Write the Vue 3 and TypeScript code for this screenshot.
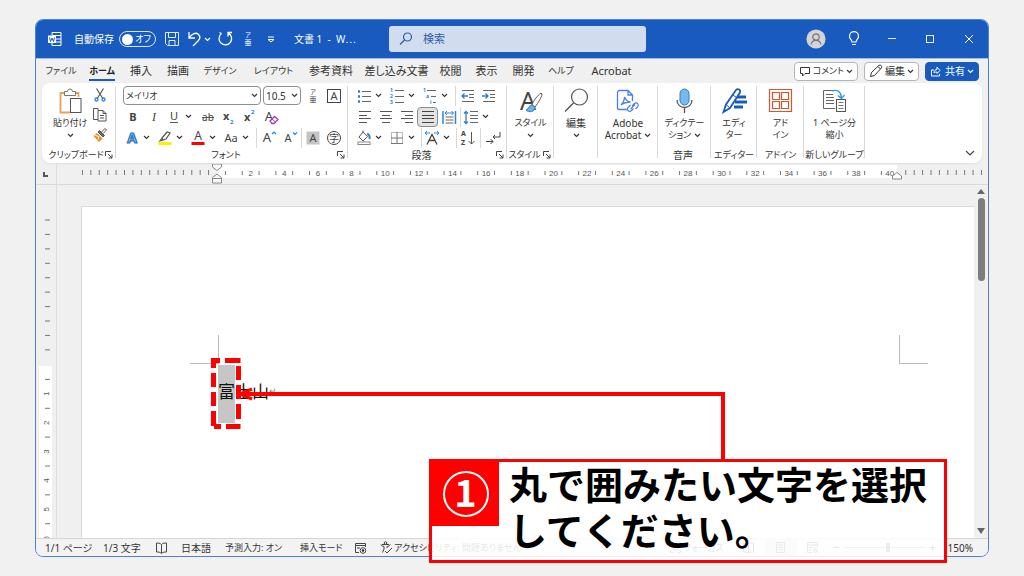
<script setup lang="ts">
import { h, ref, type FunctionalComponent } from 'vue'

const glyphs: Record<string, string> = {
  word: '<path d="M5 4V1.500h9v13H5V12M5 4.500h9M9 8h5M9 11h5" fill="none" stroke="#fff"/><rect x="1" y="4.500" width="8" height="7.500" fill="#fff"/><path d="M2.500 6.500l1 4 1.500-3.500 1.500 3.500 1-4" fill="none" stroke="#185abd"/>',
  save: '<path d="M2.500 2.500h13v13H4.500l-2-2zM5.500 2.500v5h7v-5M6 15.500v-5h6v5" fill="none" stroke="#dfe9f8"/>',
  undo: '<path d="M3 2v6h6M3 8C6 3.500 10 2 12.500 4.500S14 9 12 11l-5 5" fill="none" stroke="#fff" stroke-width="1.300"/>',
  redo: '<path d="M12 6.500V2.500h4M12 2.800A6.300 6.300 0 1 1 5.500 3.500M5.500 3.500L3.500 2.500" fill="none" stroke="#fff" stroke-width="1.300"/>',
  ruby: '<text x="9" y="7" font-size="6" text-anchor="middle">ア</text><text x="9" y="15" font-size="7" text-anchor="middle">亜</text>',
  overflow: '<path d="M6 7h6" stroke="#fff"/><path d="M6 9.500h6L9 12z" fill="none" stroke="#fff"/>',
  search: '<circle cx="10.500" cy="7" r="4" fill="none" stroke="#2b5da8" stroke-width="1.200"/><path d="M7.500 10L3 14.500" stroke="#2b5da8" stroke-width="1.300"/>',
  user: '<circle cx="10" cy="10" r="9.600" fill="#d4d4d4"/><circle cx="10" cy="8" r="3.200" fill="none" stroke="#777" stroke-width="1.200"/><path d="M5 15.500c.5-3 2.500-4.200 5-4.200s4.500 1.200 5 4.200" fill="none" stroke="#777" stroke-width="1.200"/>',
  bulb: '<path d="M7 12c0-2-2.500-2.800-2.500-5.800a4.500 4.500 0 0 1 9 0c0 3-2.500 3.800-2.500 5.800zM7 14.500h4" fill="none" stroke="#fff" stroke-width="1.200"/>',
  min: '<path d="M5 8.500h8" stroke="#e8effa"/>',
  max: '<rect x="5.500" y="5.500" width="7" height="7" fill="none" stroke="#e8effa"/>',
  close: '<path d="M5 5l8 8M13 5l-8 8" stroke="#fff"/>',
  comment: '<path d="M1.500 2.500h9v6H6l-2.500 2.500V8.500h-2z" fill="none" stroke="#333"/>',
  pencil: '<path d="M1.500 12.500l1-4L10 1.300c1.500-1 3.500 1 2.500 2.500L5.500 11.500zM9 2.500L11.500 5" fill="none" stroke="#333"/>',
  share: '<path d="M4 5H1.500v6h8V9M4 8c0-2.500 1.500-3.500 3-3.500V2l3 3.500-3 3V7C6 7 5 7 4 8z" fill="none" stroke="#fff"/>',
  paste: '<path d="M9 6H3.500v19.500H13M17 6h4.500v4" fill="none" stroke="#e8a24e" stroke-width="1.800"/><path d="M7.500 8.500V4.500h3a2.500 2.500 0 0 1 5 0h3v4z" fill="#fff" stroke="#777"/><rect x="13.500" y="11.500" width="10.500" height="14" fill="#fff" stroke="#555"/>',
  cut: '<path d="M5.500 2.500l6 9.500M12.500 2.500l-6 9.500" fill="none" stroke="#555" stroke-width="1.200"/><circle cx="5.500" cy="13.500" r="1.500" fill="none" stroke="#2b7fd0" stroke-width="1.300"/><circle cx="12.500" cy="13.500" r="1.500" fill="none" stroke="#2b7fd0" stroke-width="1.300"/>',
  copy: '<path d="M7 4V2.500H2.500v11H7M7 4.500h5l3 3v7.500H7zM12 4.500v3h3M9 9.500h4M9 12h4" fill="none" stroke="#555"/>',
  brush: '<path d="M10.500 6l3.500-3.500 1.500 1.500-3.500 3.500" fill="#fff" stroke="#555"/><path d="M8.500 4.500l5 5-1.500 1.500-5-5z" fill="#666" stroke="#555"/><path d="M6 7l5.500 5.500L8 16 2.500 10z" fill="#f08a24"/><path d="M4 9.500l4 1-1 3" stroke="#fff" fill="none"/>',
  bold: '<text x="9" y="13" font-size="11" font-weight="700" text-anchor="middle">B</text>',
  italic: '<text x="9" y="13" font-size="12" font-style="italic" font-family="Liberation Serif, serif" text-anchor="middle">I</text>',
  underline: '<text x="9" y="12" font-size="11" text-anchor="middle">U</text><path d="M5 14.500h8" stroke="#555"/>',
  strike: '<text x="9" y="13" font-size="10" text-anchor="middle">ab</text><path d="M3 9.500h12" stroke="#555"/>',
  sub: '<text x="3" y="12" font-size="11" font-weight="700">x</text><text x="10" y="16" font-size="6" font-weight="700" fill="#2b88d0">2</text>',
  sup: '<text x="3" y="13" font-size="11" font-weight="700">x</text><text x="10" y="6" font-size="6" font-weight="700" fill="#2b88d0">2</text>',
  clear: '<text x="7" y="13" font-size="13" text-anchor="middle">A</text><path d="M8 13l4.500-4.500 3.500 3-4 4H10z" fill="#fff" stroke="#a33bb5" stroke-width="1.300"/><path d="M10 11l3.500 3" stroke="#a33bb5"/>',
  effect: '<text x="9" y="14" font-size="14" font-weight="700" text-anchor="middle" fill="#9fd0f5" stroke="#2374bd" stroke-width="1.200">A</text>',
  marker: '<path d="M6 9l5-6 3 1-4 6-3 1zM6 9l-2 3 3-1" fill="none" stroke="#555" stroke-width="1.200"/><path d="M2.500 14.500h13" stroke="#fff000" stroke-width="3"/>',
  color: '<text x="9" y="11" font-size="12" text-anchor="middle">A</text><path d="M2.500 14.500h13" stroke="#f00" stroke-width="3"/>',
  case: '<text x="9" y="13" font-size="11" text-anchor="middle">Aa</text>',
  grow: '<text x="7" y="13" font-size="13" text-anchor="middle">A</text><path d="M12 5l2-2 2 2" fill="none" stroke="#2b88d0" stroke-width="1.200"/>',
  shrink: '<text x="7" y="13" font-size="11" text-anchor="middle">A</text><path d="M12 3.500l2 2 2-2" fill="none" stroke="#2b88d0" stroke-width="1.200"/>',
  shade: '<rect x="2.500" y="2.500" width="13" height="13" fill="#c4c4c4"/><text x="9" y="13" font-size="11" text-anchor="middle">A</text>',
  enclose: '<circle cx="9" cy="9" r="6.500" fill="none" stroke="#444"/><text x="9" y="12.500" font-size="10" text-anchor="middle">字</text>',
  boxed: '<rect x="2.500" y="2.500" width="13" height="13" fill="none" stroke="#444"/><text x="9" y="13" font-size="11" text-anchor="middle">A</text>',
  bullets: '<path d="M3 4.500h2M3 9.500h2M3 14.500h2" stroke="#2b7fc4" stroke-width="2.500"/><path d="M7 4.500h9M7 9.500h9M7 14.500h9" stroke="#666"/>',
  numbers: '<g font-size="5" font-weight="700" fill="#2b7fc4"><text x="2" y="5">1</text><text x="2" y="11">2</text><text x="2" y="17">3</text></g><path d="M7 3.500h9M7 9.500h9M7 15.500h9" stroke="#666"/>',
  levels: '<g font-size="5" font-weight="700" fill="#2b7fc4"><text x="2" y="5">1</text><text x="5" y="11">a</text><text x="9" y="17">i</text></g><path d="M6 3.500h9M10 9.500h5M12 15.500h3" stroke="#666"/>',
  outdent: '<path d="M3 3.500h12M10 7.500h5M10 10.500h5M3 14.500h12" stroke="#666"/><path d="M3 9h6M5.500 6.500L3 9l2.500 2.500" stroke="#2b7fc4" fill="none" stroke-width="1.300"/>',
  indent: '<path d="M3 3.500h12M10 7.500h5M10 10.500h5M3 14.500h12" stroke="#666"/><path d="M2 9h6M5.500 6.500L8 9l-2.500 2.500" stroke="#2b7fc4" fill="none" stroke-width="1.300"/>',
  left: '<path d="M3 3.500h12M3 7.500h8M3 10.500h12M3 14.500h8" stroke="#555"/>',
  center: '<path d="M3 3.500h12M5 7.500h8M3 10.500h12M5 14.500h8" stroke="#555"/>',
  right: '<path d="M3 3.500h12M7 7.500h8M3 10.500h12M7 14.500h8" stroke="#555"/>',
  justify: '<path d="M3 3.500h12M3 7.500h12M3 10.500h12M3 14.500h12" stroke="#444"/>',
  spread: '<path d="M3 3v13M15.500 3v13" stroke="#2b88d0" stroke-width="1.500"/><path d="M5 5h8.500M7 3L5 5l2 2M11.500 3l2 2-2 2" stroke="#2b88d0" fill="none"/><path d="M5.500 9h8M5.500 12h8M5.500 15h8" stroke="#666"/>',
  spacing: '<path d="M4 3.500v12M2 5.500l2-2 2 2M2 13.500l2 2 2-2" stroke="#2b7fc4" fill="none" stroke-width="1.300"/><path d="M8 3.500h8M8 7.500h8M8 10.500h8M8 14.500h8" stroke="#666"/>',
  fill: '<path d="M8 3l4.500 4.500L8 12 4 8zM8 3V1.500" fill="none" stroke="#555"/><path d="M12 5c2 0 3 2 2.500 5" stroke="#2b7fc4" stroke-width="2" fill="none"/><rect x="3" y="13" width="12" height="2.500" fill="#fff" stroke="#888"/>',
  borders: '<rect x="3.500" y="3.500" width="11" height="11" fill="none" stroke="#777" stroke-dasharray="1 1"/><path d="M9 3v12M3 9h12M3 14.500h12" stroke="#777"/>',
  scale: '<path d="M2 4h5M4 2L2 4l2 2M11 4h5M14 2l2 2-2 2" stroke="#2b88d0" fill="none"/><path d="M4 15.500L9 5.500l5 10M6 11.500h6" stroke="#444" fill="none" stroke-width="1.300"/>',
  sort: '<g font-size="7" font-weight="700"><text x="2" y="7">A</text><text x="2" y="16">Z</text></g><path d="M12.500 3v12M9.500 12l3 3 3-3" stroke="#555" fill="none"/>',
  marks: '<path d="M16 3v5H9M11 6L9 8l2 2M2 12.500h7M6.500 10l2.500 2.500L6.500 15" stroke="#444" fill="none"/>',
  styles: '<text x="11" y="23" font-size="25" text-anchor="middle">A</text><path d="M24 6c-3 2-8 8-9 12l3 2c3-4 7-10 7-13z" fill="#fff" stroke="#555"/><path d="M15 18c-3 0-3 4-6 5 3 3 9 2 9-3z" fill="#6bb3e8" stroke="#2b7fc4"/>',
  find: '<circle cx="16.500" cy="10" r="8" fill="#fafafa" stroke="#555" stroke-width="1.200"/><path d="M10.500 16L2 24.500" stroke="#555" stroke-width="1.500"/>',
  adobe: '<path d="M13 22.500H5.500a2 2 0 0 1-2-2V5.500a2 2 0 0 1 2-2H14L18.500 8v6M14 3.500V8h4.500M7 18c2-2 3.500-6 3.500-8 2 4 4 5 6 5-3 0-7 1-9.500 3" fill="none" stroke="#4b7fe8" stroke-width="1.300"/><path d="M16.500 18l-2.500 2.500c-2 2.500 1.500 5 3.500 3l2-2M18 19l2.500-2.500c2.500-2 5 1 3 3.500L21.500 22M16.500 22l4.500-4.500" fill="none" stroke="#4b7fe8" stroke-width="1.200"/>',
  mic: '<rect x="9" y="2" width="9" height="16" rx="4.500" fill="#78b9ec" stroke="#2b7fc4"/><path d="M6 13c0 10 15 10 15 0M13.500 20.500V26" fill="none" stroke="#555" stroke-width="1.300"/>',
  editor: '<path d="M16 10h9M14 15h12M13 20h9" stroke="#185abd" stroke-width="3"/><path d="M2.500 25L5 17.500 15 3c2-2 5 0 4 2.500L9 21z" fill="#fff" stroke="#185abd" stroke-width="1.800"/><path d="M5 17.500L9 21M12 8l4 3" stroke="#185abd"/>',
  addin: '<path d="M2.500 2.500h22v22h-22z" fill="#fff" stroke="#d9552c" stroke-width="1.200"/><path d="M5.500 5.500h7v7h-7zM14.500 5.500h7v7h-7zM5.500 14.500h7v7h-7zM14.500 14.500h7v7h-7z" fill="none" stroke="#d9552c" stroke-width="1.200"/>',
  shrinkpage: '<path d="M12 3.500H2.500v18H14M5 7.500h7M5 10.500h8M5 13.500h8M5 16.500h8" fill="none" stroke="#666"/><rect x="15.500" y="12.500" width="9" height="12" fill="#fff" stroke="#555"/><path d="M17.500 15.500h5M17.500 18.500h5M17.500 21.500h5" stroke="#777"/><path d="M11 4c6-2 9 1 9.500 7M17 8.500l3.500 3 3-3.500" fill="none" stroke="#2b9ae0" stroke-width="1.300"/>',
  launcher: '<path d="M1.500 6V1.500H7M4 4l4 4M8 4.500V8H4.500" fill="none" stroke="#444"/>',
  book: '<path d="M6.500 3.500C5 2 3 2 1.500 2v9c2 0 3.500 0 5 1.500C8 11 9.500 11 11.500 11V2C9.500 2 8 2 6.500 3.500zM6.500 4v8" fill="none" stroke="#444"/>',
  record: '<path d="M5 11.500H1.500v-9h10V6M1.500 4.500h10M3 7h3" fill="none" stroke="#444"/><circle cx="9" cy="9.500" r="2.800" fill="#fff" stroke="#444"/><circle cx="9" cy="9.500" r="1.300" fill="#222"/>',
  access: '<circle cx="5.500" cy="2" r="1.300" fill="none" stroke="#444"/><path d="M1 3.500c0 1.500 1.500 1.500 3 2v2.500l-1.500 3.500M10 3.500c0 1.500-1.500 1.500-3 2V7M2 3.500h7" fill="none" stroke="#444"/><path d="M5 10l2 2 5-5" fill="none" stroke="#444"/>',
  page: '<path d="M2.500 1.500h8v10h-8zM4 4h5M4 6.500h5M4 9h5" fill="none" stroke="#555"/>',
  focus: '<path d="M1.500 4V1.500H4M9 1.500h2.500V4M1.500 9v2.500H4M9 11.500h2.500V9M4 4h5v5H4z" fill="none" stroke="#555"/>',
  web: '<path d="M6 11.500H1.500v-10h10V6M1.500 4h10M3 6.500h4M3 9h3" fill="none" stroke="#555"/><circle cx="9.500" cy="9.500" r="2.500" fill="#888"/>',
}

const Icon: FunctionalComponent<{ name: string; size?: number }> = (p) => {
  const s = p.size ?? 18
  return h('svg', { class: 'ic', width: s, height: s, viewBox: `0 0 ${s} ${s}`, 'aria-hidden': 'true', innerHTML: glyphs[p.name] })
}
Icon.props = ['name', 'size']

const Chev: FunctionalComponent = () =>
  h('svg', { class: 'chev', width: 7, height: 5, viewBox: '0 0 7 5', 'aria-hidden': 'true' }, [
    h('path', { d: 'M1 1l2.500 2.500L6 1', fill: 'none', stroke: 'currentColor', 'stroke-width': 1.1 }),
  ])

const tabs = ['ファイル', 'ホーム', '挿入', '描画', 'デザイン', 'レイアウト', '参考資料', '差し込み文書', '校閲', '表示', '開発', 'ヘルプ', 'Acrobat']
const isKana = (t: string) => /^[ァ-ヶー]+$/.test(t)

type Tool = { icon?: string; label?: string; drop?: boolean; sep?: 'wide' | 'thin'; on?: boolean }
const t = (icon: string, label: string, drop = false, on = false): Tool => ({ icon, label, drop, on })
const wide: Tool = { sep: 'wide' }
const thin: Tool = { sep: 'thin' }

const fontTop = [t('ruby', 'ルビ'), t('boxed', '囲み線')]
const fontRows = [
  [t('bold', '太字'), t('italic', '斜体'), t('underline', '下線', true), t('strike', '取り消し線'), t('sub', '下付き'), t('sup', '上付き'), t('clear', '書式のクリア')],
  [t('effect', '文字の効果', true), t('marker', '蛍光ペン', true), t('color', 'フォントの色', true), t('case', '文字種の変換', true), wide, t('grow', '拡大'), t('shrink', '縮小'), thin, t('shade', '文字の網かけ'), t('enclose', '囲い文字')],
]
const paraRows = [
  [t('bullets', '箇条書き', true), t('numbers', '段落番号', true), t('levels', 'アウトライン', true), wide, t('outdent', 'インデントを減らす'), t('indent', 'インデントを増やす')],
  [t('left', '左揃え'), t('center', '中央揃え'), t('right', '右揃え'), t('justify', '両端揃え', false, true), t('spread', '均等割り付け'), thin, t('spacing', '行間', true)],
  [t('fill', '塗りつぶし', true), t('borders', '罫線', true), thin, t('scale', '拡張書式', true), thin, t('sort', '並べ替え'), wide, t('marks', '編集記号')],
]

type Big = { key: string; icon: string; lines: string[]; drop?: 'below' | 'inline'; group: string; launch?: boolean }
const bigs: Big[] = [
  { key: 'g-style', icon: 'styles', lines: ['スタイル'], drop: 'below', group: 'スタイル', launch: true },
  { key: 'g-edit', icon: 'find', lines: ['編集'], drop: 'below', group: '' },
  { key: 'g-adobe', icon: 'adobe', lines: ['Adobe', 'Acrobat'], drop: 'inline', group: '' },
  { key: 'g-voice', icon: 'mic', lines: ['ディクテー', 'ション'], drop: 'inline', group: '音声' },
  { key: 'g-editor', icon: 'editor', lines: ['エディ', 'ター'], group: 'エディター' },
  { key: 'g-addin', icon: 'addin', lines: ['アド', 'イン'], group: 'アドイン' },
  { key: 'g-new', icon: 'shrinkpage', lines: ['1 ページ分', '縮小'], group: '新しいグループ' },
]

const unit = 16.82
const origin = 181
const before = Array.from({ length: 16 }, (_, i) => origin - (i + 1) * (unit / 2))
const inside = Array.from({ length: 40 }, (_, i) => origin + (i + 0.5) * unit)
const after = Array.from({ length: 10 }, (_, i) => origin + 41 * unit + (i - 0.1) * (unit / 2))
const evens = Array.from({ length: 20 }, (_, i) => (i + 1) * 2)
const vUnit = 14.43
const vBefore = Array.from({ length: 10 }, (_, i) => 35 + i * vUnit)
const vInside = Array.from({ length: 6 }, (_, i) => i + 1)

const autosave = ref(false)
const zoom = ref(55)
</script>

<template>
  <main class="stage">
    <div class="window">
      <header class="title">
        <Icon name="word" :size="16" class="logo" />
        <label class="auto">自動保存
          <input v-model="autosave" type="checkbox" />
          <span class="switch"><i></i>オフ</span>
        </label>
        <div class="quick">
          <button aria-label="保存"><Icon name="save" /></button>
          <button aria-label="元に戻す" class="undo"><Icon name="undo" /><Chev /></button>
          <button aria-label="やり直し"><Icon name="redo" /></button>
          <button aria-label="ルビ"><Icon name="ruby" /></button>
          <button aria-label="カスタマイズ"><Icon name="overflow" /></button>
        </div>
        <span class="docname">文書 1&nbsp; - &nbsp;W⋯</span>
        <label class="search"><Icon name="search" /><input type="search" placeholder="検索" aria-label="検索" /></label>
        <div class="sys">
          <button aria-label="アカウント"><Icon name="user" :size="20" /></button>
          <button aria-label="ヒント"><Icon name="bulb" /></button>
          <button aria-label="最小化"><Icon name="min" /></button>
          <button aria-label="最大化"><Icon name="max" /></button>
          <button aria-label="閉じる"><Icon name="close" /></button>
        </div>
      </header>

      <div class="tabbar">
        <nav class="tabs">
          <button v-for="n in tabs" :key="n" :class="{ kana: isKana(n), active: n === 'ホーム' }"><span>{{ n }}</span></button>
        </nav>
        <div class="actions">
          <button class="kana"><Icon name="comment" :size="12" />コメント<Chev /></button>
          <button><Icon name="pencil" :size="14" />編集<Chev /></button>
          <button class="primary"><Icon name="share" :size="13" />共有<Chev /></button>
        </div>
      </div>

      <section class="ribbon">
        <div class="group g-clip">
          <div class="body clip">
            <button class="big"><Icon name="paste" :size="27" /><span>貼り付け</span><Chev /></button>
            <div class="stack">
              <button aria-label="切り取り"><Icon name="cut" /></button>
              <button aria-label="コピー"><Icon name="copy" /></button>
              <button aria-label="書式のコピー"><Icon name="brush" /></button>
            </div>
          </div>
          <div class="foot"><span>クリップボード</span><button aria-label="クリップボードの詳細"><Icon name="launcher" :size="9" /></button></div>
        </div>

        <div class="group g-font">
          <div class="body rows">
            <div class="row first">
              <label class="pick face"><select aria-label="フォント"><option>メイリオ</option></select><Chev /></label>
              <label class="pick pt"><select aria-label="サイズ"><option>10.5</option></select><Chev /></label>
              <button v-for="x in fontTop" :key="x.icon" class="tool" :aria-label="x.label"><Icon :name="x.icon!" /></button>
            </div>
            <div v-for="(r, i) in fontRows" :key="i" class="row">
              <template v-for="(x, j) in r" :key="j">
                <i v-if="x.sep" :class="['sep', x.sep]"></i>
                <button v-else :class="['tool', { drop: x.drop, on: x.on }]" :aria-label="x.label"><Icon :name="x.icon!" /><Chev v-if="x.drop" /></button>
              </template>
            </div>
          </div>
          <div class="foot"><span>フォント</span><button aria-label="フォントの詳細"><Icon name="launcher" :size="9" /></button></div>
        </div>

        <div class="group g-para">
          <div class="body rows">
            <div v-for="(r, i) in paraRows" :key="i" class="row">
              <template v-for="(x, j) in r" :key="j">
                <i v-if="x.sep" :class="['sep', x.sep]"></i>
                <button v-else :class="['tool', { drop: x.drop, on: x.on }]" :aria-label="x.label"><Icon :name="x.icon!" /><Chev v-if="x.drop" /></button>
              </template>
            </div>
          </div>
          <div class="foot"><span class="kanji">段落</span><button aria-label="段落の詳細"><Icon name="launcher" :size="9" /></button></div>
        </div>

        <div v-for="b in bigs" :key="b.key" :class="['group', b.key]">
          <div class="body">
            <button class="big">
              <Icon :name="b.icon" :size="27" />
              <span v-for="(l, i) in b.lines" :key="l">{{ l }}<Chev v-if="b.drop === 'inline' && i === 1" /></span>
              <Chev v-if="b.drop === 'below'" />
            </button>
          </div>
          <div class="foot"><span>{{ b.group }}</span><button v-if="b.launch" aria-label="スタイルの詳細"><Icon name="launcher" :size="9" /></button></div>
        </div>
        <button class="fold" aria-label="リボンを折りたたむ">
          <svg width="10" height="6" viewBox="0 0 10 6"><path d="M1 1l4 4 4-4" fill="none" stroke="#444" stroke-width="1.200" /></svg>
        </button>
      </section>

      <div class="hruler">
        <svg width="952" height="20" viewBox="0 0 952 20">
          <rect x="181" y="1" width="680" height="13" fill="#fff" />
          <path d="M8 8v4h4" fill="none" stroke="#555" stroke-width="2" />
          <path d="M20.500 0v20" stroke="#dcdcdc" />
          <path v-for="x in before" :key="x" :d="`M${x} 6v5`" stroke="#777" />
          <path v-for="x in inside" :key="x" :d="`M${x} 7v4`" stroke="#777" />
          <path v-for="x in after" :key="x" :d="`M${x} 6v5`" stroke="#777" />
          <text v-for="n in evens" :key="n" :x="origin + n * unit" y="12" text-anchor="middle">{{ n }}</text>
          <path d="M176.500 0h9v3l-4.500 3.500L176.500 3zM176.500 19v-5.500L181 10l4.500 3.500V19zM176.500 14.500h9" fill="#f8f8f8" stroke="#888" />
          <path d="M856.500 15v-3l4.500-3.500 4.500 3.500v3z" fill="#fff" stroke="#888" />
        </svg>
      </div>

      <section class="work">
        <svg class="vruler" width="21" height="355" viewBox="0 0 21 355">
          <rect x="3" y="181" width="13" height="174" fill="#fff" />
          <path d="M20.500 0v355" stroke="#dcdcdc" />
          <path v-for="y in vBefore" :key="y" :d="`M9 ${y}h5`" stroke="#777" />
          <template v-for="n in vInside" :key="n">
            <path :d="`M9 ${180 + (n * 2 - 1) * vUnit}h5`" stroke="#777" />
            <text :transform="`translate(13 ${180 + n * 2 * vUnit}) rotate(-90)`" text-anchor="middle">{{ n }}</text>
          </template>
        </svg>
        <article class="paper">
          <i class="corner tl"></i>
          <i class="corner tr"></i>
          <p class="line"><mark>富</mark>士山<small>↵</small></p>
        </article>
        <div class="scroll">
          <i class="up"></i><i class="thumb"></i><i class="down"></i>
        </div>
      </section>

      <footer class="status">
        <span class="s-page">1/1 ページ</span>
        <span class="s-count">1/3 文字</span>
        <Icon name="book" :size="13" />
        <span class="s-lang">日本語</span>
        <span class="s-pred">予測入力: オン</span>
        <span class="s-mode">挿入モード</span>
        <Icon name="record" :size="13" />
        <span class="s-acc"><Icon name="access" :size="13" />アクセシビリティ: 問題ありません</span>
        <div class="views">
          <span class="focus"><Icon name="focus" :size="13" />フォーカス</span>
          <button aria-label="閲覧モード"><Icon name="book" :size="13" /></button>
          <button class="current" aria-label="印刷レイアウト"><Icon name="page" :size="13" /></button>
          <button aria-label="Web レイアウト"><Icon name="web" :size="13" /></button>
          <button class="step" aria-label="縮小">−</button>
          <input v-model="zoom" type="range" aria-label="ズーム" />
          <button class="step" aria-label="拡大">+</button>
          <span class="pct">150%</span>
        </div>
      </footer>
    </div>

    <svg class="pointer" width="520" height="110" viewBox="0 0 520 110" aria-hidden="true">
      <g fill="none" stroke="#f00" stroke-width="5">
        <path d="M3.500 11V3.500H10M15 3.500h15.500M28.500 9v14M28.500 28v14M28.500 47v15M3.500 16v14M3.500 35v14M3.500 54v15M4 69.500h7M16 69.500h14.500" />
        <path d="M31 37H513V103" stroke-width="4" />
        <path d="M42 32l-12 5 12 5" stroke-width="3" />
      </g>
    </svg>
    <aside class="callout">
      <div class="num"><b>1</b></div>
      <p>丸で囲みたい文字を選択<br />してください。</p>
    </aside>
  </main>
</template>

<style>
body { margin: 0; background: #f1f1f1; }
</style>

<style scoped>
* { box-sizing: border-box; }
.stage { position: relative; min-height: 100vh; padding: 19px 35px; overflow: hidden; font-family: "Noto Sans", "Noto Sans CJK JP", sans-serif; font-feature-settings: "palt"; font-size: 10px; line-height: 12px; color: #333; }
button { display: flex; align-items: center; justify-content: center; padding: 0; border: 0; background: none; color: inherit; font: inherit; font-feature-settings: inherit; white-space: nowrap; }
input, select { font: inherit; font-feature-settings: inherit; color: inherit; }
.ic { flex: none; fill: #444; display: block; overflow: visible; }
.chev { flex: none; }
.window { height: calc(100vh - 38px); display: flex; flex-direction: column; overflow: hidden; border: 1px solid #4c82d6; border-radius: 8px; background: #f0f0f0; }

.title { flex: none; height: 38px; display: flex; align-items: center; background: #185abd; color: #fff; padding: 0 9px 0 11px; }
.title .ic { fill: #fff; }
.auto { display: flex; align-items: center; margin-left: 11px; gap: 5px; white-space: nowrap; }
.auto input { position: absolute; opacity: 0; width: 1px; height: 1px; }
.switch { display: flex; align-items: center; justify-content: space-between; width: 37px; height: 16px; border: 1px solid #dbe6f7; border-radius: 8px; padding: 0 4px 0 2px; font-size: 9px; }
.switch i { width: 11px; height: 11px; border-radius: 50%; background: #fff; }
.quick { display: flex; margin-left: 7px; gap: 5px; }
.quick .undo { width: 25px; justify-content: space-between; }
.docname { margin-left: 14px; width: 95px; font-size: 10px; white-space: nowrap; }
.search { flex: 0 1 257px; height: 26px; display: flex; align-items: center; gap: 8px; padding-left: 8px; border-radius: 3px; background: #d1dcee; }
.search input { flex: 1; min-width: 0; border: 0; background: none; outline: 0; padding: 0; font-size: 11px; }
.search input::placeholder { color: #2b5da8; opacity: 1; }
.sys { margin-left: auto; display: flex; align-items: center; }
.sys button { width: 38px; height: 26px; }
.sys button:last-child { width: 20px; margin-left: 10px; }

.tabbar { flex: none; height: 25px; display: flex; justify-content: space-between; padding: 0 9px 0 3px; border-top: 1px solid #9fbdeb; }
.tabs { display: grid; grid-template-columns: 44px 38px 40px 34px 50px 57px 58px 73px 35px 37px 37px 38px 63px; font-size: 11px; }
.kana { font-size: 9px; }
.tabs span { padding-bottom: 1px; border-bottom: 2px solid transparent; line-height: 14px; margin-top: 2px; }
.tabs .active { font-weight: 700; color: #222; }
.tabs .active span { border-color: #185abd; }
.actions { display: flex; align-items: center; gap: 6px; font-size: 10px; }
.actions button { height: 19px; gap: 2px; padding: 0 4px; border: 1px solid #b5b5b5; border-radius: 4px; background: #fff; }
.actions .kana { font-size: 9px; }
.actions .primary { background: #185abd; border-color: #185abd; color: #fff; }

.ribbon { flex: none; height: 80px; margin: 0 6px; display: flex; border-radius: 8px; background: #fff; box-shadow: 0 1px 2px #dedede; }
.group { flex: none; display: flex; flex-direction: column; padding: 2px 0; position: relative; }
.group::after { content: ""; position: absolute; right: 0; top: 3px; bottom: 5px; width: 1px; background: #d8d8d8; }
.g-clip { width: 74px; } .g-font { width: 232px; } .g-para { width: 159px; } .g-style { width: 47px; } .g-edit { width: 44px; }
.g-adobe { width: 60px; } .g-voice { width: 53px; } .g-editor { width: 46px; } .g-addin { width: 47px; } .g-new { width: 61px; }
.body { height: 63px; display: flex; justify-content: center; }
.clip { padding-left: 11px; justify-content: flex-start; gap: 4px; }
.stack { display: flex; flex-direction: column; gap: 2px; padding-top: 1px; }
.big { flex-direction: column; justify-content: flex-start; padding-top: 2px; }
.big span { display: flex; align-items: center; gap: 3px; line-height: 12px; }
.big > .ic { margin-bottom: 3px; }
.big > .chev { margin-top: 4px; }
.big span, .foot { font-size: 9px; }
.g-edit .big span, .g-adobe .big span, .foot .kanji, .g-voice .foot { font-size: 10px; }
.foot { height: 13px; display: flex; align-items: center; padding-right: 3px; white-space: nowrap; }
.foot span { flex: 1; text-align: center; }
.g-new .foot, .g-editor .foot, .g-addin .foot { padding: 0; }
.g-clip .foot { padding-left: 6px; }
.rows { flex-direction: column; justify-content: flex-start; padding-left: 6px; }
.row { display: flex; align-items: center; height: 21px; }
.first { padding-left: 1px; }
.tool { width: 21px; height: 20px; }
.tool.drop { width: 33px; justify-content: flex-start; padding-left: 1px; gap: 2px; }
.tool.on { background: #e3e3e3; border: 1px solid #8a8a8a; border-radius: 4px; }
.sep { height: 20px; position: relative; }
.sep::after { content: ""; position: absolute; left: 50%; top: 0; bottom: 0; width: 1px; background: #d8d8d8; }
.wide { width: 4px; }
.thin { width: 2px; }
.pick { display: grid; align-items: center; height: 19px; border: 1px solid #8f8f8f; border-radius: 4px; margin-right: 2px; }
.pick > * { grid-area: 1 / 1; }
.pick .chev { justify-self: end; margin-right: 2px; pointer-events: none; }
.pick select { appearance: none; width: 100%; border: 0; background: none; padding: 0 2px; outline: 0; font-size: 10px; }
.pick.face { width: 138px; }
.pick.face select { font-size: 9px; }
.pick.pt { width: 38px; margin-right: 1px; }
.fold { margin: auto 7px 7px auto; }

.hruler { flex: none; height: 22px; padding-top: 1px; overflow: hidden; border-bottom: 1px solid #d9d9d9; }
.hruler svg, .vruler { display: block; font-family: "Liberation Sans", sans-serif; font-size: 8px; fill: #555; }
.work { flex: 1; min-height: 0; display: flex; overflow: hidden; }
.vruler { flex: none; }
.paper { flex: 1; position: relative; margin: 21px 0 0 24px; border: 1px solid #dadada; border-width: 1px 0 0 1px; background: #fff; }
.corner { position: absolute; width: 29px; height: 29px; top: 128px; border: 0 solid #bcbcbc; border-bottom-width: 1px; }
.tl { left: 108px; border-right-width: 1px; }
.tr { right: 46px; border-left-width: 1px; }
.line { display: flex; height: 58px; margin: 158px 0 0 136px; font-family: "Noto Sans CJK JP", sans-serif; font-feature-settings: normal; font-size: 17px; line-height: 52px; color: #111; }
.line mark { height: 58px; background: #c6c6c6; color: inherit; }
.line small { font-size: 9px; color: #888; }
.scroll { flex: none; width: 14px; display: flex; flex-direction: column; align-items: center; padding: 4px 0; background: #f0f0f0; }
.up, .down { border: 4px solid transparent; }
.up { border-top: 0; border-bottom: 5px solid #666; }
.down { border-bottom: 0; border-top: 6px solid #666; margin-top: auto; }
.thumb { width: 7px; height: 83px; margin-top: 4px; border-radius: 4px; background: #7d7d7d; }

.status { flex: none; height: 18px; display: flex; align-items: center; padding-left: 9px; border-top: 1px solid #d5d5d5; background: #f3f3f3; white-space: nowrap; font-size: 10px; }
.s-page { width: 58px; } .s-count { width: 52px; } .s-lang { margin-left: 13px; width: 44px; }
.s-pred { width: 75px; } .s-mode { width: 54px; }
.s-mode, .s-pred { font-size: 9px; }
.s-acc { margin-left: 13px; display: flex; align-items: center; gap: 1px; font-size: 9px; }
.views { margin-left: auto; display: flex; align-items: center; padding-right: 15px; }
.focus { display: flex; align-items: center; gap: 2px; font-size: 9px; margin-right: 9px; }
.views button { width: 32px; height: 17px; }
.views .current { background: #ddd; }
.views .step { width: 16px; font-size: 12px; }
.views input { appearance: none; width: 80px; height: 12px; margin: 0; background: linear-gradient(#888, #888) center / 100% 1px no-repeat; }
.views input::-webkit-slider-thumb { appearance: none; width: 4px; height: 9px; background: #666; }
.pct { margin-left: 7px; }

.pointer { position: absolute; left: 210px; top: 357px; }
.callout { position: absolute; left: 429px; top: 459px; width: 518px; height: 104px; display: flex; border: 3px solid #f00; background: rgba(255, 255, 255, .88); }
.num { flex: none; width: 67px; height: 64px; display: grid; place-items: center; background: #f00; color: #fff; }
.num b { width: 46px; height: 46px; border: 2px solid #fff; border-radius: 50%; text-align: center; font: 700 38px/36px "Noto Sans CJK JP", sans-serif; }
.callout p { margin: -2px 0 0 10px; font: 700 38px/46px "Noto Sans CJK JP", sans-serif; font-feature-settings: normal; color: #000; white-space: nowrap; }
</style>
